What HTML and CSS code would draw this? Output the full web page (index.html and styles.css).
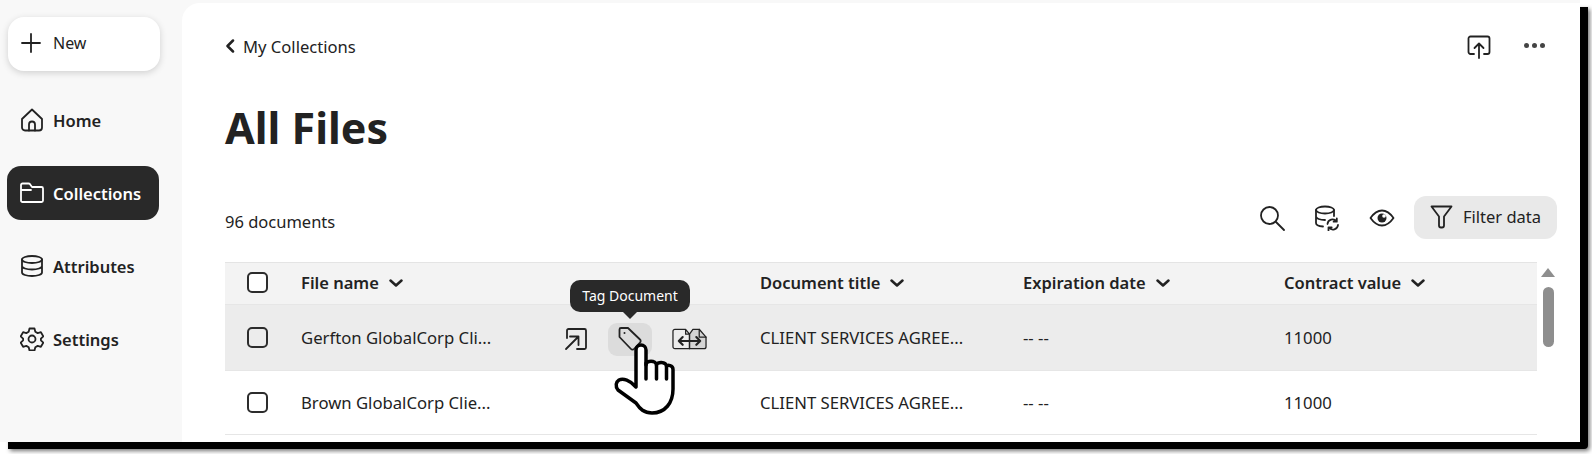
FILE: index.html
```html
<!DOCTYPE html>
<html lang="en">
<head>
    <meta charset="UTF-8">
    <title>All Files</title>
    <link rel="stylesheet" href="styles.css">
</head>
<body>
    <div class="frame">
        <aside class="sidebar">
            <button class="new-btn">
                <svg width="20" height="20" viewBox="0 0 20 20" class="icon"><path d="M10 1v18M1 10h18"/></svg>
                New
            </button>
            <nav class="nav">
                <div class="nav-item">
                    <svg width="24" height="24" viewBox="0 0 24 24" class="icon"><path d="M2 11 12 1.500 22 11v8.500a3 3 0 0 1-3 3H5a3 3 0 0 1-3-3z"/><path d="M9 22.500v-6a3 3 0 0 1 6 0v6"/></svg>
                    Home
                </div>
                <div class="nav-item active">
                    <svg width="24" height="22" viewBox="0 0 24 22" class="icon"><path d="M1 4V3a1.500 1.500 0 0 1 1.500-1.500h6a2 2 0 0 1 1.500.7L12 5h9.500A1.500 1.500 0 0 1 23 6.500v12a1.500 1.500 0 0 1-1.500 1.500h-19A1.500 1.500 0 0 1 1 18.500zM1 8h10"/></svg>
                    Collections
                </div>
                <div class="nav-item">
                    <svg width="24" height="24" viewBox="0 0 24 24" class="icon"><ellipse cx="12" cy="5.500" rx="10" ry="3.500"/><path d="M2 5.500v13c0 2 4.500 3.500 10 3.500s10-1.500 10-3.500v-13M2 12c0 2 4.500 3.500 10 3.500S22 14 22 12"/></svg>
                    Attributes
                </div>
                <div class="nav-item">
                    <svg width="24" height="24" viewBox="0 0 24 24" class="icon"><circle cx="12" cy="12" r="3.500"/><path d="M9.500 1.500h5l.8 3.200 2.400 1.400 3.200-.9 2.400 4.200-2.400 2.300v1.600l2.400 2.300-2.400 4.200-3.200-.9-2.400 1.400-.8 3.200h-5l-.8-3.200-2.400-1.400-3.200.9L.7 15.600l2.400-2.300v-1.600L.7 9.400l2.400-4.200 3.200.9 2.400-1.400z"/></svg>
                    Settings
                </div>
            </nav>
        </aside>

        <main class="main">
            <div class="topbar">
                <div class="crumb">
                    <svg width="10" height="14" viewBox="0 0 10 14" class="icon thick"><path d="M8 1.500 2.500 7 8 12.500"/></svg>
                    My Collections
                </div>
                <div class="top-actions">
                    <svg width="24" height="24" viewBox="0 0 24 24" class="icon"><path d="M7 19H3.500A2 2 0 0 1 1.500 17V3.500a2 2 0 0 1 2-2h17a2 2 0 0 1 2 2V17a2 2 0 0 1-2 2H17M12 23V8.500M7.500 13 12 8.500l4.500 4.500"/></svg>
                    <div class="dots"><span></span><span></span><span></span></div>
                </div>
            </div>

            <h1>All Files</h1>

            <div class="toolbar">
                <span class="count">96 documents</span>
                <div class="tools">
                    <svg width="26" height="26" viewBox="0 0 26 26" class="icon"><circle cx="10.500" cy="10.500" r="8.500"/><path d="m17 17 8 8"/></svg>
                    <svg width="26" height="26" viewBox="0 0 26 26" class="icon"><ellipse cx="11" cy="5" rx="9" ry="3.500"/><path d="M2 5v13c0 2 3 3.300 7 3.500M20 5v6M2 11.500c0 2 4 3.500 9 3.500"/><path d="M13.500 19a5 5 0 0 1 9-2.500M24 20a5 5 0 0 1-9 2.500M22.800 13.500v3.200h-3.200M14.500 25.500v-3.200h3.200"/></svg>
                    <svg width="26" height="18" viewBox="0 0 26 18" class="icon"><path d="M1.500 9C5 4 9 1.500 13 1.500S21 4 24.500 9C21 14 17 16.500 13 16.500S5 14 1.500 9z"/><circle cx="13" cy="9" r="4.500" class="solid"/><circle cx="15" cy="7" r="1.800" class="hole"/></svg>
                    <button class="filter-btn">
                        <svg width="23" height="24" viewBox="0 0 23 24" class="icon"><path d="M1.500 1.500h20L14 11.500v9a2 2 0 0 1-2 2h-1a2 2 0 0 1-2-2v-9z"/></svg>
                        Filter data
                    </button>
                </div>
            </div>

            <div class="table-wrap">
                <div class="table">
                    <div class="row head">
                        <div class="check"></div>
                        <div class="cell">File name <svg width="14" height="8" viewBox="0 0 14 8" class="icon thick"><path d="m1.500 1.500 5.500 5 5.500-5"/></svg></div>
                        <div></div>
                        <div class="cell">Document title <svg width="14" height="8" viewBox="0 0 14 8" class="icon thick"><path d="m1.500 1.500 5.500 5 5.500-5"/></svg></div>
                        <div class="cell">Expiration date <svg width="14" height="8" viewBox="0 0 14 8" class="icon thick"><path d="m1.500 1.500 5.500 5 5.500-5"/></svg></div>
                        <div class="cell">Contract value <svg width="14" height="8" viewBox="0 0 14 8" class="icon thick"><path d="m1.500 1.500 5.500 5 5.500-5"/></svg></div>
                    </div>
                    <div class="row hover">
                        <div class="check"></div>
                        <div class="cell">Gerfton GlobalCorp Cli...</div>
                        <div class="row-actions">
                            <svg width="24" height="24" viewBox="0 0 24 24" class="icon"><path d="M3 11V3.500A1.500 1.500 0 0 1 4.500 2h16A1.500 1.500 0 0 1 22 3.500v17a1.500 1.500 0 0 1-1.500 1.500H13"/><path d="m2 22 12-12M6 9.500h8.500V18"/></svg>
                            <div class="tag-btn">
                                <div class="tooltip">Tag Document</div>
                                <svg width="26" height="26" viewBox="0 0 26 26" class="icon"><path d="M2.500 3.500a1.500 1.500 0 0 1 1.500-1.500h7l12 11.500a2 2 0 0 1 0 3L17 23a2 2 0 0 1-3 0L2.500 11z"/><circle cx="7.500" cy="7" r="1" class="solid"/></svg>
                            </div>
                            <svg width="35" height="24" viewBox="0 0 36 24" class="icon thin"><path d="M18 7l3.500-5H28l7 8v10a2 2 0 0 1-2 2H18z" class="shade"/><path d="M18 22H3a2 2 0 0 1-2-2V4a2 2 0 0 1 2-2h11l4 5zM14 2v5h4M28 2v8h7"/><path d="M7 14h22M11 10l-4 4 4 4M25 10l4 4-4 4" class="bold"/></svg>
                        </div>
                        <div class="cell">CLIENT SERVICES AGREE...</div>
                        <div class="cell">-- --</div>
                        <div class="cell">11000</div>
                    </div>
                    <div class="row">
                        <div class="check"></div>
                        <div class="cell">Brown GlobalCorp Clie...</div>
                        <div></div>
                        <div class="cell">CLIENT SERVICES AGREE...</div>
                        <div class="cell">-- --</div>
                        <div class="cell">11000</div>
                    </div>
                </div>
                <div class="scrollbar">
                    <div class="arrow"></div>
                    <div class="thumb"></div>
                </div>
            </div>
        </main>

        <svg class="hand" width="62" height="72" viewBox="0 0 62 72"><path d="M22 44V7a5 5 0 0 1 10 0v15c0-5 10-5 10.500 0 0-3 9.500-4 10 1.500 1-2 6.500-1.500 6.500 3V46c0 14-8 24-21 24-8 0-12-4-16-10L4 47c-3-4-2-8 1-10 4-2 11 0 17 7z"/><path d="M32 20v16M42.500 22v14M52.500 24v12"/></svg>
    </div>
</body>
</html>
```

FILE: styles.css
```css
* {
    box-sizing: border-box;
}

html, body {
    margin: 0;
    height: 454px;
    overflow: hidden;
    background: #fff;
}

body {
    font-family: "Noto Sans", sans-serif;
    color: #222;
}

.frame {
    position: relative;
    display: flex;
    width: 1580px;
    height: 442px;
    background: #f8f8f8;
    border-bottom-right-radius: 4px;
    box-shadow: 8px 7px 0 #000, 10px 9px 4px #777;
}

.icon {
    fill: none;
    stroke: currentColor;
    stroke-width: 1.800;
    stroke-linecap: round;
    stroke-linejoin: round;
    flex: none;
}

.icon.thick {
    stroke-width: 2.500;
}

.icon.thin {
    stroke-width: 1.300;
}

.icon .solid {
    fill: currentColor;
    stroke: none;
}

.icon .hole {
    fill: #fff;
    stroke: none;
}

.icon .shade {
    fill: #d4d4d4;
}

.icon .bold {
    stroke-width: 2.200;
}

/* sidebar */
.sidebar {
    width: 182px;
    flex: none;
    padding: 17px 0 0 7px;
}

.new-btn {
    display: flex;
    align-items: center;
    gap: 12px;
    width: 152px;
    height: 54px;
    margin-left: 1px;
    padding: 0 0 3px 13px;
    border: none;
    border-radius: 16px;
    background: #fff;
    box-shadow: 0 2px 7px rgba(0, 0, 0, 0.16);
    font: 16px "Noto Sans", sans-serif;
    color: #222;
}

.nav {
    display: flex;
    flex-direction: column;
    gap: 19px;
    margin-top: 22px;
}

.nav-item {
    display: flex;
    align-items: center;
    gap: 9px;
    width: 152px;
    height: 54px;
    padding-left: 13px;
    border-radius: 14px;
    font-size: 16.500px;
    font-weight: 600;
}

.nav-item.active {
    background: #292929;
    color: #fff;
}

/* main panel */
.main {
    flex: 1;
    margin-top: 3px;
    padding: 0 23px 0 43px;
    background: #fff;
    border-top-left-radius: 18px;
    min-width: 0;
}

.topbar {
    display: flex;
    align-items: center;
    justify-content: space-between;
    height: 30px;
    margin-top: 29px;
    padding-right: 12px;
}

.crumb {
    display: flex;
    align-items: center;
    gap: 8px;
    margin-top: -2px;
    font-size: 16.600px;
}

.top-actions {
    display: flex;
    align-items: center;
    gap: 33px;
}

.dots {
    display: flex;
    gap: 3px;
    margin-top: -3px;
}

.dots span {
    width: 5px;
    height: 5px;
    border-radius: 50%;
    background: #444;
}

h1 {
    margin: 34px 0 0;
    font-size: 43px;
    line-height: 64px;
    font-weight: 700;
}

.toolbar {
    display: flex;
    align-items: center;
    justify-content: space-between;
    height: 43px;
    margin-top: 36px;
}

.count {
    font-size: 16.500px;
    margin-top: 7px;
}

.tools {
    display: flex;
    align-items: center;
    gap: 29px;
}

.filter-btn {
    display: flex;
    align-items: center;
    gap: 10px;
    width: 143px;
    height: 43px;
    margin-left: -10px;
    padding: 0 0 2px 16px;
    border: none;
    border-radius: 12px;
    background: #e9e9e9;
    font: 16.500px "Noto Sans", sans-serif;
    color: #222;
}

/* table */
.table-wrap {
    display: flex;
    gap: 4px;
    margin-top: 23px;
}

.table {
    flex: 1;
    min-width: 0;
}

.row {
    display: grid;
    grid-template-columns: 76px 264px 195px 263px 261px 1fr;
    align-items: center;
    height: 64px;
    border-bottom: 1px solid #e6e6e6;
    font-size: 16.700px;
}

.row.head {
    height: 43px;
    padding-bottom: 2px;
    background: #f3f3f3;
    border-top: 1px solid #e4e4e4;
    font-size: 16.500px;
    font-weight: 600;
}

.row.hover {
    height: 66px;
    background: #ececec;
}

.check {
    width: 21px;
    height: 21px;
    margin-left: 22px;
    border: 2px solid #2c2c2c;
    border-radius: 5px;
    background: #fff;
}

.row.hover .check {
    background: none;
}

.cell {
    display: flex;
    align-items: center;
    gap: 10px;
    white-space: nowrap;
}

.row-actions {
    display: flex;
    align-items: center;
    margin: 3px 0 0 -1px;
}

.tag-btn {
    position: relative;
    display: flex;
    align-items: center;
    justify-content: center;
    width: 44px;
    height: 33px;
    margin: 0 20px;
    border-radius: 9px;
    background: #dcdcdc;
}

.tooltip {
    position: absolute;
    left: -38px;
    top: -43px;
    width: 120px;
    height: 32px;
    border-radius: 10px;
    background: #292929;
    color: #fff;
    font-size: 14px;
    line-height: 31px;
    text-align: center;
}

.tooltip::after {
    content: "";
    position: absolute;
    left: 53px;
    top: 32px;
    border: 7px solid transparent;
    border-top-color: #292929;
    border-bottom: none;
}

.scrollbar {
    width: 14px;
    margin-right: 2px;
    padding-top: 6px;
}

.arrow {
    width: 0;
    margin: 0 auto;
    border: 7px solid transparent;
    border-bottom: 9px solid #8e8e8e;
    border-top: none;
}

.thumb {
    width: 11px;
    height: 60px;
    margin: 10px auto 0;
    border-radius: 6px;
    background: #8e8e8e;
}

/* mouse pointer over the tag button */
.hand {
    position: absolute;
    left: 614px;
    top: 343px;
    fill: #fff;
    stroke: #000;
    stroke-width: 3.500;
    stroke-linejoin: round;
    stroke-linecap: round;
}
```
